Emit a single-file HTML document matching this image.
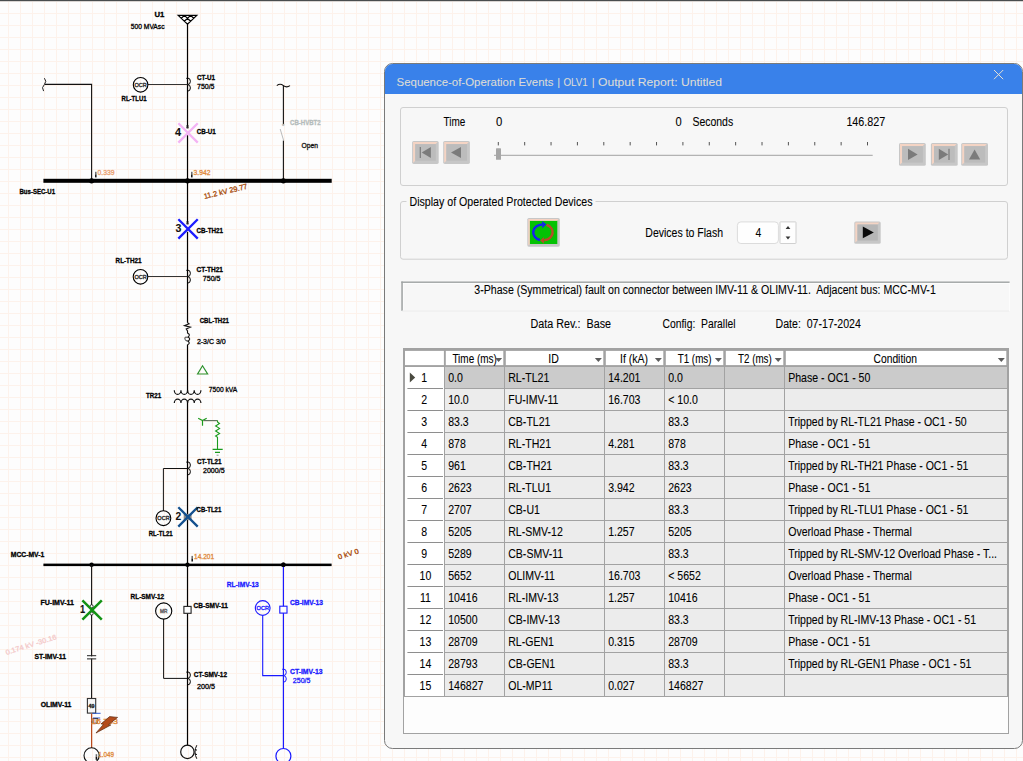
<!DOCTYPE html>
<html><head><meta charset="utf-8"><title>Sequence-of-Operation Events</title>
<style>
html,body{margin:0;padding:0;background:#fdfdfd;}
body{width:1023px;height:761px;overflow:hidden;position:relative;font-family:"Liberation Sans",sans-serif;}
svg{position:absolute;left:0;top:0;display:block;}
svg text{font-family:"Liberation Sans",sans-serif;}
</style></head><body>
<svg width="1023" height="761" viewBox="0 0 1023 761">
<defs>
<pattern id="grid" x="0" y="0" width="12" height="12" patternUnits="userSpaceOnUse">
<rect x="8" y="0" width="1" height="12" fill="#fdf2eb"/>
<rect x="0" y="1" width="12" height="1" fill="#fdf2eb"/>
</pattern>
</defs>
<rect x="0" y="0" width="1023" height="761" fill="#fdfdfd"/>
<rect x="0" y="0" width="1023" height="761" fill="url(#grid)"/>
<rect x="0" y="0" width="1023" height="1" fill="#484d4e"/>
<rect x="0" y="1" width="1023" height="0.5" fill="#b4b8b8"/>

<g id="oneline">
<path d="M178.2 15.4 H196.8 L187.5 24.2 Z M184.4 15.4 L181.3 18.3 M190.6 15.4 L184.4 21.3 M190.6 15.4 L193.7 18.3 M184.4 15.4 L190.6 21.3" stroke="#000" stroke-width="1.2" fill="none" />
<text x="154.50" y="16.80" font-size="7.4" fill="#000" textLength="9.80" lengthAdjust="spacingAndGlyphs" font-weight="bold" stroke="#000" stroke-width="0.3" >U1</text>
<text x="130.80" y="29.10" font-size="7" fill="#000" textLength="33.70" lengthAdjust="spacingAndGlyphs" stroke="#000" stroke-width="0.3" >500 MVAsc</text>
<line x1="187.50" y1="24.00" x2="187.50" y2="126.60" stroke="#000" stroke-width="1.2" />
<line x1="187.50" y1="135.20" x2="187.50" y2="222.40" stroke="#000" stroke-width="1.2" />
<line x1="187.50" y1="231.80" x2="187.50" y2="322.80" stroke="#000" stroke-width="1.2" />
<line x1="187.50" y1="344.60" x2="187.50" y2="392.60" stroke="#000" stroke-width="1.2" />
<line x1="187.50" y1="400.50" x2="187.50" y2="745.40" stroke="#000" stroke-width="1.2" />
<path d="M187.50 78.00 a2.9 3.3 0 0 1 0 6.6 a2.9 3.3 0 0 1 0 6.6" stroke="#000" stroke-width="1.0" fill="none" />
<path d="M186.10 78.60 l1.2 -0.8" stroke="#000" stroke-width="0.8" fill="none" />
<line x1="147.80" y1="84.50" x2="187.50" y2="84.50" stroke="#333" stroke-width="1.0" />
<circle cx="140.60" cy="84.80" r="7.30" fill="none" stroke="#000" stroke-width="1.1"/>
<text x="134.50" y="86.70" font-size="5" fill="#2a2a2a" textLength="12.40" lengthAdjust="spacingAndGlyphs" stroke="#2a2a2a" stroke-width="0.3" >OCR</text>
<text x="121.60" y="100.60" font-size="7" fill="#000" textLength="25.00" lengthAdjust="spacingAndGlyphs" font-weight="bold" stroke="#000" stroke-width="0.3" >RL-TLU1</text>
<text x="196.90" y="79.80" font-size="7" fill="#000" textLength="18.10" lengthAdjust="spacingAndGlyphs" font-weight="bold" stroke="#000" stroke-width="0.3" >CT-U1</text>
<text x="197.00" y="88.70" font-size="7" fill="#000" textLength="17.50" lengthAdjust="spacingAndGlyphs" stroke="#000" stroke-width="0.3" >750/5</text>
<path d="M44.4 78.2 q2.8 3 0 6.3 q-3.4 3 -0.8 6.6" stroke="#222" stroke-width="1.0" fill="none" />
<path d="M44.8 84.4 H91.6 V180" stroke="#111" stroke-width="1.1" fill="none" />
<path d="M276.8 85.6 q3.3 -2.6 6.6 0 q3.3 2.6 6.6 0" stroke="#111" stroke-width="1.1" fill="none" />
<line x1="283.40" y1="85.60" x2="283.40" y2="124.80" stroke="#111" stroke-width="1.1" />
<line x1="283.40" y1="140.40" x2="283.40" y2="180.00" stroke="#111" stroke-width="1.1" />
<line x1="283.60" y1="140.40" x2="280.20" y2="129.00" stroke="#bbb" stroke-width="1.0" />
<text x="282.00" y="128.00" font-size="6" fill="#bbb" stroke="#bbb" stroke-width="0.3" >*</text>
<text x="290.00" y="124.50" font-size="7" fill="#b4bcbc" textLength="30.70" lengthAdjust="spacingAndGlyphs" font-weight="bold" stroke="#b4bcbc" stroke-width="0.3" >CB-HVBT2</text>
<text x="301.50" y="148.40" font-size="7" fill="#111" textLength="16.50" lengthAdjust="spacingAndGlyphs" stroke="#111" stroke-width="0.3" >Open</text>
<path d="M178.35 123.20 L197.75 142.60 M197.75 123.20 L178.35 142.60" stroke="#f4b4f4" stroke-width="2.3" fill="none" />
<path d="M186 125.6 L189 128.2 M189 125.6 L186 128.2 M187.5 125 V128.6" stroke="#111" stroke-width="0.8" fill="none" />
<text x="175.10" y="135.90" font-size="10" fill="#111" textLength="6.10" lengthAdjust="spacingAndGlyphs" font-weight="bold" stroke="#111" stroke-width="0.08" >4</text>
<text x="196.80" y="133.70" font-size="7" fill="#000" textLength="19.00" lengthAdjust="spacingAndGlyphs" font-weight="bold" stroke="#000" stroke-width="0.3" >CB-U1</text>
<rect x="43.4" y="178.8" width="288.3" height="4" fill="#000"/>
<circle cx="91.6" cy="180.8" r="2.6" fill="#000"/>
<circle cx="187.5" cy="180.8" r="2.6" fill="#000"/>
<circle cx="283.4" cy="180.8" r="2.6" fill="#000"/>
<text x="19.50" y="193.50" font-size="7" fill="#000" textLength="35.60" lengthAdjust="spacingAndGlyphs" font-weight="bold" stroke="#000" stroke-width="0.3" >Bus-SEC-U1</text>
<rect x="95.05" y="171.80" width="1.5" height="2.6" fill="#6a6a6a"/>
<rect x="95.05" y="174.40" width="1.5" height="3" fill="#111"/>
<text x="97.60" y="175.00" font-size="6.8" fill="#e9a070" textLength="17.00" lengthAdjust="spacingAndGlyphs" stroke="#e9a070" stroke-width="0.3" >0.339</text>
<rect x="191.05" y="171.80" width="1.5" height="2.6" fill="#6a6a6a"/>
<rect x="191.05" y="174.40" width="1.5" height="3" fill="#111"/>
<text x="193.60" y="175.00" font-size="6.8" fill="#e08a3c" textLength="16.80" lengthAdjust="spacingAndGlyphs" stroke="#e08a3c" stroke-width="0.3" >3.942</text>
<g transform="translate(204.4,198.9) rotate(-13.3)">
<text x="0.00" y="0.00" font-size="7.4" fill="#a84a08" textLength="44.60" lengthAdjust="spacingAndGlyphs" stroke="#a84a08" stroke-width="0.3" >11.2 kV 29.77</text>
</g>
<path d="M178.35 219.20 L197.75 238.60 M197.75 219.20 L178.35 238.60" stroke="#1c1cff" stroke-width="2.3" fill="none" />
<path d="M186 221.6 L189 224.2 M189 221.6 L186 224.2 M187.5 221 V224.6" stroke="#111" stroke-width="0.8" fill="none" />
<text x="175.40" y="232.00" font-size="10" fill="#111" textLength="5.90" lengthAdjust="spacingAndGlyphs" font-weight="bold" stroke="#111" stroke-width="0.08" >3</text>
<text x="196.60" y="232.70" font-size="7" fill="#000" textLength="26.40" lengthAdjust="spacingAndGlyphs" font-weight="bold" stroke="#000" stroke-width="0.3" >CB-TH21</text>
<path d="M187.50 270.00 a2.9 3.3 0 0 1 0 6.6 a2.9 3.3 0 0 1 0 6.6" stroke="#000" stroke-width="1.0" fill="none" />
<path d="M186.10 270.60 l1.2 -0.8" stroke="#000" stroke-width="0.8" fill="none" />
<line x1="147.80" y1="276.50" x2="187.50" y2="276.50" stroke="#333" stroke-width="1.0" />
<circle cx="140.50" cy="276.80" r="7.30" fill="none" stroke="#000" stroke-width="1.1"/>
<text x="134.40" y="278.70" font-size="5" fill="#2a2a2a" textLength="12.40" lengthAdjust="spacingAndGlyphs" stroke="#2a2a2a" stroke-width="0.3" >OCR</text>
<text x="115.60" y="262.60" font-size="7" fill="#000" textLength="25.80" lengthAdjust="spacingAndGlyphs" font-weight="bold" stroke="#000" stroke-width="0.3" >RL-TH21</text>
<text x="196.60" y="271.70" font-size="7" fill="#000" textLength="26.40" lengthAdjust="spacingAndGlyphs" font-weight="bold" stroke="#000" stroke-width="0.3" >CT-TH21</text>
<text x="202.80" y="280.70" font-size="7" fill="#000" textLength="17.70" lengthAdjust="spacingAndGlyphs" stroke="#000" stroke-width="0.3" >750/5</text>
<path d="M187.5 322.6 L189.1 323.8 L184.5 325.6 L190.4 327.1 L186.2 328.9 L187.5 331 V333 q3.4 1.6 0.6 4 q3.2 2 0 4.2 q2.6 2 -0.6 3.6" stroke="#111" stroke-width="1.1" fill="none" />
<path d="M187.6 337.6 q-3.4 -1.6 -2.6 1.6 q0.6 2.4 2.8 1.6" stroke="#222" stroke-width="0.9" fill="none" />
<text x="199.70" y="322.60" font-size="7" fill="#000" textLength="29.30" lengthAdjust="spacingAndGlyphs" font-weight="bold" stroke="#000" stroke-width="0.3" >CBL-TH21</text>
<text x="196.90" y="343.70" font-size="7" fill="#000" textLength="28.80" lengthAdjust="spacingAndGlyphs" stroke="#000" stroke-width="0.3" >2-3/C 3/0</text>
<path d="M202.5 365.8 L207.6 374 H197.6 Z" stroke="#2e922e" stroke-width="1.2" fill="none" />
<path d="M174.3 390.2 a3.3 4.2 0 0 0 6.65 0 a3.3 4.2 0 0 0 6.65 0 a3.3 4.2 0 0 0 6.65 0 a3.3 4.2 0 0 0 6.65 0" stroke="#111" stroke-width="1.2" fill="none" />
<path d="M174.3 403.1 a3.3 3.9 0 0 1 6.65 0 a3.3 3.9 0 0 1 6.65 0 a3.3 3.9 0 0 1 6.65 0 a3.3 3.9 0 0 1 6.65 0" stroke="#111" stroke-width="1.2" fill="none" />
<text x="208.80" y="391.90" font-size="7" fill="#000" textLength="28.40" lengthAdjust="spacingAndGlyphs" stroke="#000" stroke-width="0.3" >7500 kVA</text>
<text x="146.00" y="397.80" font-size="7" fill="#000" textLength="15.10" lengthAdjust="spacingAndGlyphs" font-weight="bold" stroke="#000" stroke-width="0.3" >TR21</text>
<path d="M198.2 418.3 L202.5 420.6 L206.7 418.3 M202.5 420.6 V425.8" stroke="#1c9a1c" stroke-width="1.2" fill="none" />
<line x1="203.60" y1="420.60" x2="217.50" y2="420.60" stroke="#5a6e5a" stroke-width="1.1" />
<path d="M217.5 420.4 V422 L219.5 423.5 L215.6 426 L219.6 428.4 L215.6 431 L219.6 433.5 L215.6 436 L217.5 437.2 V449.4 M212.6 449.4 H222.7 M215 452.4 H220" stroke="#1c9a1c" stroke-width="1.1" fill="none" />
<line x1="216.60" y1="455.20" x2="218.60" y2="455.20" stroke="#8a9a8a" stroke-width="1.0" />
<path d="M187.50 461.80 a2.9 3.3 0 0 1 0 6.6 a2.9 3.3 0 0 1 0 6.6" stroke="#000" stroke-width="1.0" fill="none" />
<path d="M186.10 462.40 l1.2 -0.8" stroke="#000" stroke-width="0.8" fill="none" />
<path d="M187.5 468.5 H163.4 V511" stroke="#111" stroke-width="1.0" fill="none" />
<circle cx="163.40" cy="518.20" r="7.40" fill="none" stroke="#000" stroke-width="1.1"/>
<text x="157.30" y="520.10" font-size="5" fill="#2a2a2a" textLength="12.40" lengthAdjust="spacingAndGlyphs" stroke="#2a2a2a" stroke-width="0.3" >OCR</text>
<text x="196.90" y="463.60" font-size="7" fill="#000" textLength="24.60" lengthAdjust="spacingAndGlyphs" font-weight="bold" stroke="#000" stroke-width="0.3" >CT-TL21</text>
<text x="203.00" y="472.70" font-size="7" fill="#000" textLength="21.60" lengthAdjust="spacingAndGlyphs" stroke="#000" stroke-width="0.3" >2000/5</text>
<text x="148.80" y="535.60" font-size="7" fill="#000" textLength="23.90" lengthAdjust="spacingAndGlyphs" font-weight="bold" stroke="#000" stroke-width="0.3" >RL-TL21</text>
<rect x="183.7" y="513.9" width="7.9" height="6.2" fill="#8a8a8a"/>
<path d="M178.30 507.20 L197.70 526.60 M197.70 507.20 L178.30 526.60" stroke="#14508e" stroke-width="2.3" fill="none" />
<text x="175.40" y="519.80" font-size="10" fill="#111" textLength="5.70" lengthAdjust="spacingAndGlyphs" font-weight="bold" stroke="#111" stroke-width="0.08" >2</text>
<text x="196.60" y="511.70" font-size="7" fill="#000" textLength="24.70" lengthAdjust="spacingAndGlyphs" font-weight="bold" stroke="#000" stroke-width="0.3" >CB-TL21</text>
<rect x="43.4" y="563.6" width="288.2" height="2.5" fill="#000"/>
<circle cx="91.6" cy="564.8" r="2.2" fill="#000"/>
<circle cx="187.5" cy="564.8" r="2.2" fill="#000"/>
<circle cx="283.4" cy="564.8" r="2.2" fill="#000"/>
<text x="10.80" y="556.60" font-size="7" fill="#000" textLength="33.40" lengthAdjust="spacingAndGlyphs" font-weight="bold" stroke="#000" stroke-width="0.3" >MCC-MV-1</text>
<rect x="191.45" y="555.90" width="1.5" height="2.6" fill="#6a6a6a"/>
<rect x="191.45" y="558.50" width="1.5" height="3" fill="#111"/>
<text x="194.00" y="559.10" font-size="6.8" fill="#e08a3c" textLength="20.10" lengthAdjust="spacingAndGlyphs" stroke="#e08a3c" stroke-width="0.3" >14.201</text>
<g transform="translate(338.8,559.6) rotate(-17.5)">
<text x="0.00" y="0.00" font-size="7.2" fill="#a84808" textLength="21.50" lengthAdjust="spacingAndGlyphs" stroke="#a84808" stroke-width="0.3" >0 kV 0</text>
</g>
<line x1="91.60" y1="565.00" x2="91.60" y2="698.40" stroke="#111" stroke-width="1.1" />
<circle cx="91.6" cy="606.3" r="1.6" fill="#fff" stroke="#222" stroke-width="0.9"/>
<circle cx="91.6" cy="613.5" r="1.6" fill="#fff" stroke="#222" stroke-width="0.9"/>
<path d="M82.40 600.30 L101.80 619.70 M101.80 600.30 L82.40 619.70" stroke="#149214" stroke-width="2.5" fill="none" />
<text x="79.90" y="612.90" font-size="10" fill="#111" textLength="5.20" lengthAdjust="spacingAndGlyphs" font-weight="bold" stroke="#111" stroke-width="0.08" >1</text>
<text x="40.50" y="604.50" font-size="7" fill="#000" textLength="33.40" lengthAdjust="spacingAndGlyphs" font-weight="bold" stroke="#000" stroke-width="0.3" >FU-IMV-11</text>
<rect x="86" y="656.4" width="11.4" height="2.2" fill="#fdfdfd"/>
<line x1="87.00" y1="655.70" x2="96.20" y2="655.70" stroke="#222" stroke-width="1.0" />
<line x1="87.00" y1="658.90" x2="96.20" y2="658.90" stroke="#222" stroke-width="1.0" />
<text x="34.40" y="658.70" font-size="7" fill="#000" textLength="31.60" lengthAdjust="spacingAndGlyphs" font-weight="bold" stroke="#000" stroke-width="0.3" >ST-IMV-11</text>
<g transform="translate(6.4,655) rotate(-17.5)">
<text x="0.00" y="0.00" font-size="7" fill="#f4caca" textLength="53.00" lengthAdjust="spacingAndGlyphs" stroke="#f4caca" stroke-width="0.3" >0.174 kV -30.16</text>
</g>
<rect x="87.4" y="698.5" width="8.3" height="14.6" fill="#f6f6f6" stroke="#333" stroke-width="1.1"/>
<text x="88.60" y="708.40" font-size="5" fill="#222" textLength="6.00" lengthAdjust="spacingAndGlyphs" font-weight="bold" stroke="#222" stroke-width="0.3" >49</text>
<text x="40.70" y="706.90" font-size="7" fill="#000" textLength="30.70" lengthAdjust="spacingAndGlyphs" font-weight="bold" stroke="#000" stroke-width="0.3" >OLIMV-11</text>
<line x1="91.60" y1="713.40" x2="91.60" y2="748.00" stroke="#b84a1e" stroke-width="1.2" />
<line x1="92.40" y1="713.30" x2="100.60" y2="713.30" stroke="#2a5ad0" stroke-width="1.0" />
<line x1="93.00" y1="718.00" x2="100.20" y2="718.00" stroke="#2a5ad0" stroke-width="1.0" />
<rect x="93" y="718.6" width="4.6" height="4.6" fill="#d4d4dc" stroke="#2a2a3a" stroke-width="0.9"/>
<text x="91.00" y="723.60" font-size="6.6" fill="#e08a3c" textLength="27.00" lengthAdjust="spacingAndGlyphs" stroke="#e08a3c" stroke-width="0.3" >16.703</text>
<path d="M109.6 716.6 L117.6 717.4 L108.6 724.6 L110.8 725 L96 733 L103.4 724.4 L101.2 723.8 Z" stroke="#5c2c12" stroke-width="0.7" fill="#b44c1c" />
<circle cx="91.6" cy="755.4" r="7.6" fill="none" stroke="#111" stroke-width="1.1"/>
<rect x="95.65" y="754.20" width="1.5" height="2.6" fill="#6a6a6a"/>
<rect x="95.65" y="756.80" width="1.5" height="3" fill="#111"/>
<text x="98.20" y="757.40" font-size="6.8" fill="#e08a3c" textLength="15.70" lengthAdjust="spacingAndGlyphs" stroke="#e08a3c" stroke-width="0.3" >1.049</text>
<rect x="183.9" y="606.4" width="7.2" height="6.9" fill="#fdfdfd" stroke="#222" stroke-width="1.1"/>
<text x="193.60" y="608.00" font-size="7" fill="#000" textLength="34.30" lengthAdjust="spacingAndGlyphs" font-weight="bold" stroke="#000" stroke-width="0.3" >CB-SMV-11</text>
<path d="M163.6 619 V678.4 H187.5" stroke="#111" stroke-width="1.0" fill="none" />
<circle cx="163.70" cy="611.00" r="8.10" fill="none" stroke="#000" stroke-width="1.1"/>
<text x="160.10" y="612.80" font-size="4.6" fill="#555" textLength="7.40" lengthAdjust="spacingAndGlyphs" stroke="#555" stroke-width="0.3" >MR</text>
<text x="130.60" y="598.70" font-size="7" fill="#000" textLength="33.60" lengthAdjust="spacingAndGlyphs" font-weight="bold" stroke="#000" stroke-width="0.3" >RL-SMV-12</text>
<path d="M187.50 671.80 a2.9 3.3 0 0 1 0 6.6 a2.9 3.3 0 0 1 0 6.6" stroke="#000" stroke-width="1.0" fill="none" />
<path d="M186.10 672.40 l1.2 -0.8" stroke="#000" stroke-width="0.8" fill="none" />
<text x="193.80" y="676.90" font-size="7" fill="#000" textLength="33.20" lengthAdjust="spacingAndGlyphs" font-weight="bold" stroke="#000" stroke-width="0.3" >CT-SMV-12</text>
<text x="197.00" y="688.60" font-size="7" fill="#000" textLength="18.00" lengthAdjust="spacingAndGlyphs" stroke="#000" stroke-width="0.3" >200/5</text>
<circle cx="187.4" cy="751.9" r="6.7" fill="none" stroke="#111" stroke-width="1.2"/>
<path d="M196.8 745.2 Q193.2 752 196.8 758.8 M194.9 749.4 L197 750.2 M194.7 753.8 L197 754.6" stroke="#111" stroke-width="1.0" fill="none" />
<line x1="283.40" y1="565.00" x2="283.40" y2="748.20" stroke="#1a1aff" stroke-width="1.2" />
<circle cx="283.4" cy="564.8" r="2.2" fill="#000"/>
<rect x="279.8" y="606.2" width="7.2" height="6.9" fill="#fdfdfd" stroke="#1a1aff" stroke-width="1.1"/>
<path d="M262.7 615.4 V675.6 H283.4" stroke="#1a1aff" stroke-width="1.1" fill="none" />
<circle cx="262.70" cy="608.00" r="7.40" fill="none" stroke="#1a1aff" stroke-width="1.1"/>
<text x="256.60" y="609.90" font-size="5" fill="#1a1aff" textLength="12.40" lengthAdjust="spacingAndGlyphs" stroke="#1a1aff" stroke-width="0.3" >OCR</text>
<text x="226.80" y="586.80" font-size="7" fill="#1a1aff" textLength="32.00" lengthAdjust="spacingAndGlyphs" font-weight="bold" stroke="#1a1aff" stroke-width="0.3" >RL-IMV-13</text>
<text x="290.00" y="604.90" font-size="7" fill="#1a1aff" textLength="33.00" lengthAdjust="spacingAndGlyphs" font-weight="bold" stroke="#1a1aff" stroke-width="0.3" >CB-IMV-13</text>
<path d="M283.40 669.00 a2.9 3.3 0 0 1 0 6.6 a2.9 3.3 0 0 1 0 6.6" stroke="#1a1aff" stroke-width="1.0" fill="none" />
<path d="M282.00 669.60 l1.2 -0.8" stroke="#1a1aff" stroke-width="0.8" fill="none" />
<text x="290.00" y="673.50" font-size="7" fill="#1a1aff" textLength="32.50" lengthAdjust="spacingAndGlyphs" font-weight="bold" stroke="#1a1aff" stroke-width="0.3" >CT-IMV-13</text>
<text x="292.80" y="682.80" font-size="7" fill="#1a1aff" textLength="17.70" lengthAdjust="spacingAndGlyphs" stroke="#1a1aff" stroke-width="0.3" >250/5</text>
<circle cx="283.4" cy="756" r="7.5" fill="none" stroke="#1a1aff" stroke-width="1.2"/>
</g>
<g id="dialog">
<path d="M384.5 740.5 V71.5 a8 8 0 0 1 8 -8 H1014.5 a8 8 0 0 1 8 8 V740.5 a8 8 0 0 1 -8 8 H392.5 a8 8 0 0 1 -8 -8 Z" fill="#f7f7f7" stroke="#7a7a7a" stroke-width="1"/>
<path d="M385.0 94 V71.5 a7.5 7.5 0 0 1 7.5 -7.5 H1014.5 a7.5 7.5 0 0 1 7.5 7.5 V94 Z" fill="#3981ea"/>
<text x="396.60" y="85.90" font-size="11" fill="#dcdcd6" textLength="156.80" lengthAdjust="spacingAndGlyphs" stroke="#dcdcd6" stroke-width="0.08" >Sequence-of-Operation Events</text>
<text x="557.20" y="85.90" font-size="11" fill="#dcdcd6" stroke="#dcdcd6" stroke-width="0.08" >|</text>
<text x="563.40" y="85.90" font-size="11" fill="#dcdcd6" textLength="24.40" lengthAdjust="spacingAndGlyphs" stroke="#dcdcd6" stroke-width="0.08" >OLV1</text>
<text x="591.80" y="85.90" font-size="11" fill="#dcdcd6" stroke="#dcdcd6" stroke-width="0.08" >|</text>
<text x="598.10" y="85.90" font-size="11" fill="#dcdcd6" textLength="123.90" lengthAdjust="spacingAndGlyphs" stroke="#dcdcd6" stroke-width="0.08" >Output Report: Untitled</text>
<path d="M994 70 L1003.2 79.2 M1003.2 70 L994 79.2" stroke="#e6e0d4" stroke-width="1.0" fill="none" />
<rect x="400.5" y="107.5" width="607" height="78" rx="2.5" fill="none" stroke="#d0d0d0" stroke-width="1"/>
<text x="443.60" y="125.80" font-size="12" fill="#000" textLength="21.80" lengthAdjust="spacingAndGlyphs" stroke="#000" stroke-width="0.08" >Time</text>
<text x="495.90" y="125.80" font-size="12" fill="#000" textLength="6.30" lengthAdjust="spacingAndGlyphs" stroke="#000" stroke-width="0.08" >0</text>
<text x="675.40" y="125.80" font-size="12" fill="#000" textLength="6.20" lengthAdjust="spacingAndGlyphs" stroke="#000" stroke-width="0.08" >0</text>
<text x="692.40" y="125.80" font-size="12" fill="#000" textLength="40.80" lengthAdjust="spacingAndGlyphs" stroke="#000" stroke-width="0.08" >Seconds</text>
<text x="846.40" y="125.80" font-size="12" fill="#000" textLength="38.90" lengthAdjust="spacingAndGlyphs" stroke="#000" stroke-width="0.08" >146.827</text>
<rect x="412.10" y="141.00" width="26.60" height="22.90" fill="#c7c7c7" rx="1.6"/>
<path d="M413.10 142.00 H437.50 L435.50 144.20 H415.30 V160.70 L413.10 162.70 Z" fill="#f4d4c4"/>
<rect x="415.20" y="144.10" width="20.60" height="16.60" fill="#bcbcbc" />
<rect x="419.70" y="147.00" width="1.20" height="11.00" fill="#7b7b7b" />
<path d="M421.7 152.5 L430.9 147 V158 Z" stroke="none" stroke-width="0" fill="#7b7b7b" />
<rect x="443.20" y="141.00" width="26.70" height="22.90" fill="#c7c7c7" rx="1.6"/>
<path d="M444.20 142.00 H468.70 L466.70 144.20 H446.40 V160.70 L444.20 162.70 Z" fill="#f4d4c4"/>
<rect x="446.30" y="144.10" width="20.70" height="16.60" fill="#bcbcbc" />
<path d="M451 152.5 L461 147 V158 Z" stroke="none" stroke-width="0" fill="#7b7b7b" />
<rect x="497.80" y="142.00" width="1.00" height="3.40" fill="#555" />
<rect x="524.17" y="142.00" width="1.00" height="3.40" fill="#555" />
<rect x="550.54" y="142.00" width="1.00" height="3.40" fill="#555" />
<rect x="576.91" y="142.00" width="1.00" height="3.40" fill="#555" />
<rect x="603.29" y="142.00" width="1.00" height="3.40" fill="#555" />
<rect x="629.66" y="142.00" width="1.00" height="3.40" fill="#555" />
<rect x="656.03" y="142.00" width="1.00" height="3.40" fill="#555" />
<rect x="682.40" y="142.00" width="1.00" height="3.40" fill="#555" />
<rect x="708.77" y="142.00" width="1.00" height="3.40" fill="#555" />
<rect x="735.14" y="142.00" width="1.00" height="3.40" fill="#555" />
<rect x="761.51" y="142.00" width="1.00" height="3.40" fill="#555" />
<rect x="787.89" y="142.00" width="1.00" height="3.40" fill="#555" />
<rect x="814.26" y="142.00" width="1.00" height="3.40" fill="#555" />
<rect x="840.63" y="142.00" width="1.00" height="3.40" fill="#555" />
<rect x="867.00" y="142.00" width="1.00" height="3.40" fill="#555" />
<rect x="494.00" y="154.80" width="378.70" height="1.00" fill="#a2a2a2" />
<rect x="496.00" y="148.20" width="5.00" height="11.60" fill="#a6a6a6" rx="0.6"/>
<rect x="899.00" y="143.00" width="26.80" height="22.80" fill="#c7c7c7" rx="1.6"/>
<path d="M900.00 144.00 H924.60 L922.60 146.20 H902.20 V162.60 L900.00 164.60 Z" fill="#f4d4c4"/>
<rect x="902.10" y="146.10" width="20.80" height="16.50" fill="#bcbcbc" />
<path d="M917.6 154.4 L908 148.8 V160 Z" stroke="none" stroke-width="0" fill="#7b7b7b" />
<rect x="930.90" y="143.00" width="26.80" height="22.80" fill="#c7c7c7" rx="1.6"/>
<path d="M931.90 144.00 H956.50 L954.50 146.20 H934.10 V162.60 L931.90 164.60 Z" fill="#f4d4c4"/>
<rect x="934.00" y="146.10" width="20.80" height="16.50" fill="#bcbcbc" />
<path d="M948.2 154.4 L938.8 148.8 V160 Z" stroke="none" stroke-width="0" fill="#7b7b7b" />
<rect x="948.40" y="148.80" width="1.20" height="11.20" fill="#7b7b7b" />
<rect x="961.20" y="143.00" width="26.80" height="22.80" fill="#c7c7c7" rx="1.6"/>
<path d="M962.20 144.00 H986.80 L984.80 146.20 H964.40 V162.60 L962.20 164.60 Z" fill="#f4d4c4"/>
<rect x="964.30" y="146.10" width="20.80" height="16.50" fill="#bcbcbc" />
<path d="M974.6 149.4 L980.2 159.4 H969 Z" stroke="none" stroke-width="0" fill="#7b7b7b" />
<rect x="400.5" y="201.5" width="607" height="57.7" rx="2.5" fill="none" stroke="#d0d0d0" stroke-width="1"/>
<rect x="406.50" y="199.00" width="189.00" height="5.00" fill="#f7f7f7" />
<text x="409.50" y="206.10" font-size="12" fill="#000" textLength="183.00" lengthAdjust="spacingAndGlyphs" stroke="#000" stroke-width="0.08" >Display of Operated Protected Devices</text>
<rect x="527.30" y="218.00" width="32.50" height="28.70" fill="#c7c7c7" rx="1.6"/>
<path d="M528.3 219 H558.6 L556.8 221 H530 V244 L528.3 245.6 Z" fill="#f6d2c2"/>
<rect x="529.90" y="220.90" width="27.40" height="23.10" fill="#04c204" />
<path d="M539.9 240 A9.6 8 0 0 1 542.2 224.4" fill="none" stroke="#1422f0" stroke-width="2.5"/>
<path d="M546.5 224.8 A9.6 8 0 0 1 544.2 240.2" fill="none" stroke="#b84c28" stroke-width="2.5"/>
<path d="M542.1 221.1 L546.3 224.5 L542.3 228.3 Z" fill="#1422f0"/>
<path d="M543.9 237 L540.2 240.4 L543.9 243.8 Z" fill="#b84c28"/>
<text x="645.30" y="236.70" font-size="12" fill="#000" textLength="77.80" lengthAdjust="spacingAndGlyphs" stroke="#000" stroke-width="0.08" >Devices to Flash</text>
<rect x="737.4" y="221.9" width="41" height="21.6" rx="3.5" fill="#fefefe" stroke="#dcdcdc" stroke-width="1"/>
<text x="755.40" y="236.70" font-size="12" fill="#000" textLength="5.80" lengthAdjust="spacingAndGlyphs" stroke="#000" stroke-width="0.08" >4</text>
<rect x="780" y="221.9" width="16" height="21.6" rx="0.5" fill="#fefefe" stroke="#d0d0d0" stroke-width="1"/>
<path d="M788 226 L790.4 229 H785.6 Z" stroke="none" stroke-width="0" fill="#333" />
<path d="M788 239.4 L790.4 236.4 H785.6 Z" stroke="none" stroke-width="0" fill="#333" />
<rect x="854.30" y="221.40" width="26.40" height="22.40" fill="#c7c7c7" rx="1.6"/>
<path d="M855.30 222.40 H879.50 L877.50 224.60 H857.50 V240.60 L855.30 242.60 Z" fill="#f4d4c4"/>
<rect x="857.40" y="224.50" width="20.40" height="16.10" fill="#b6b6b6" />
<path d="M873.8 232.4 L862.8 226.6 V238.2 Z" stroke="none" stroke-width="0" fill="#0a0a0a" />
<rect x="401.30" y="281.50" width="608.60" height="29.90" fill="#f7f7f7" />
<rect x="402.60" y="282.80" width="606.80" height="1.00" fill="#fdfdfd" />
<rect x="402.60" y="282.80" width="1.00" height="27.80" fill="#fdfdfd" />
<rect x="401.30" y="281.50" width="608.30" height="1.40" fill="#9ea2a2" />
<rect x="401.30" y="281.50" width="1.50" height="29.30" fill="#9ea2a2" />
<rect x="402.00" y="310.60" width="607.90" height="0.90" fill="#ebebeb" />
<rect x="1009.00" y="282.90" width="1.00" height="28.50" fill="#fcfcfc" />
<text x="474.30" y="293.70" font-size="12" fill="#000" textLength="461.50" lengthAdjust="spacingAndGlyphs" stroke="#000" stroke-width="0.08" style="white-space:pre">3-Phase (Symmetrical) fault on connector between IMV-11 &amp; OLIMV-11.  Adjacent bus: MCC-MV-1</text>
<text x="530.50" y="327.50" font-size="12" fill="#000" textLength="80.50" lengthAdjust="spacingAndGlyphs" stroke="#000" stroke-width="0.08" style="white-space:pre">Data Rev.:  Base</text>
<text x="662.50" y="327.50" font-size="12" fill="#000" textLength="73.00" lengthAdjust="spacingAndGlyphs" stroke="#000" stroke-width="0.08" style="white-space:pre">Config:  Parallel</text>
<text x="775.50" y="327.50" font-size="12" fill="#000" textLength="85.40" lengthAdjust="spacingAndGlyphs" stroke="#000" stroke-width="0.08" style="white-space:pre">Date:  07-17-2024</text>
<rect x="403.00" y="348.00" width="606.00" height="386.00" fill="#a2a2a2" />
<rect x="404.00" y="349.00" width="604.00" height="384.00" fill="#fdfdfd" />
<rect x="404.00" y="348.00" width="605.00" height="19.00" fill="#a2a2a2" />
<rect x="404.00" y="367.00" width="605.00" height="330.00" fill="#a2a2a2" />
<rect x="405.00" y="350.90" width="38.90" height="14.20" fill="#ffffff" />
<rect x="445.80" y="350.90" width="57.50" height="14.20" fill="#ffffff" />
<rect x="505.80" y="350.90" width="97.50" height="14.20" fill="#ffffff" />
<rect x="605.80" y="350.90" width="57.50" height="14.20" fill="#ffffff" />
<rect x="665.80" y="350.90" width="57.50" height="14.20" fill="#ffffff" />
<rect x="725.80" y="350.90" width="57.50" height="14.20" fill="#ffffff" />
<rect x="785.80" y="350.90" width="220.50" height="14.20" fill="#ffffff" />
<text x="452.40" y="363.40" font-size="12" fill="#000" textLength="44.50" lengthAdjust="spacingAndGlyphs" stroke="#000" stroke-width="0.08" >Time (ms)</text>
<path d="M495.10 358 h7 l-3.5 4 z" stroke="none" stroke-width="0" fill="#5c5c5c" />
<text transform="translate(553.50,363.40) scale(0.88,1)" font-size="12" fill="#000" text-anchor="middle" stroke="#000" stroke-width="0.08">ID</text>
<path d="M594.90 358 h7 l-3.5 4 z" stroke="none" stroke-width="0" fill="#5c5c5c" />
<text x="620.10" y="363.40" font-size="12" fill="#000" textLength="27.90" lengthAdjust="spacingAndGlyphs" stroke="#000" stroke-width="0.08" >If (kA)</text>
<path d="M654.90 358 h7 l-3.5 4 z" stroke="none" stroke-width="0" fill="#5c5c5c" />
<text x="677.70" y="363.40" font-size="12" fill="#000" textLength="33.80" lengthAdjust="spacingAndGlyphs" stroke="#000" stroke-width="0.08" >T1 (ms)</text>
<path d="M714.90 358 h7 l-3.5 4 z" stroke="none" stroke-width="0" fill="#5c5c5c" />
<text x="738.00" y="363.40" font-size="12" fill="#000" textLength="33.70" lengthAdjust="spacingAndGlyphs" stroke="#000" stroke-width="0.08" >T2 (ms)</text>
<path d="M774.70 358 h7 l-3.5 4 z" stroke="none" stroke-width="0" fill="#5c5c5c" />
<text x="873.50" y="363.40" font-size="12" fill="#000" textLength="43.50" lengthAdjust="spacingAndGlyphs" stroke="#000" stroke-width="0.08" >Condition</text>
<path d="M997.80 358 h7 l-3.5 4 z" stroke="none" stroke-width="0" fill="#5c5c5c" />
<rect x="405.00" y="367.00" width="39.00" height="22.00" fill="#ffffff" />
<rect x="407.40" y="388.00" width="35.60" height="1.00" fill="#8e8e8e" />
<rect x="445.00" y="367.00" width="59.00" height="21.00" fill="#cbcbcb" />
<rect x="505.00" y="367.00" width="99.00" height="21.00" fill="#cbcbcb" />
<rect x="605.00" y="367.00" width="59.00" height="21.00" fill="#cbcbcb" />
<rect x="665.00" y="367.00" width="59.00" height="21.00" fill="#cbcbcb" />
<rect x="725.00" y="367.00" width="59.00" height="21.00" fill="#cbcbcb" />
<rect x="785.00" y="367.00" width="222.00" height="21.00" fill="#cbcbcb" />
<text transform="translate(424.30,382.20) scale(0.88,1)" font-size="12" fill="#000" text-anchor="middle" stroke="#000" stroke-width="0.08">1</text>
<text transform="translate(448.20,382.20) scale(0.88,1)" font-size="12" fill="#000" stroke="#000" stroke-width="0.08">0.0</text>
<text transform="translate(508.20,382.20) scale(0.88,1)" font-size="12" fill="#000" stroke="#000" stroke-width="0.08">RL-TL21</text>
<text transform="translate(608.20,382.20) scale(0.88,1)" font-size="12" fill="#000" stroke="#000" stroke-width="0.08">14.201</text>
<text transform="translate(668.20,382.20) scale(0.88,1)" font-size="12" fill="#000" stroke="#000" stroke-width="0.08">0.0</text>
<text transform="translate(788.20,382.20) scale(0.88,1)" font-size="12" fill="#000" stroke="#000" stroke-width="0.08">Phase - OC1 - 50</text>
<rect x="405.00" y="389.00" width="39.00" height="22.00" fill="#ffffff" />
<rect x="407.40" y="410.00" width="35.60" height="1.00" fill="#8e8e8e" />
<rect x="445.00" y="389.00" width="59.00" height="21.00" fill="#ececec" />
<rect x="505.00" y="389.00" width="99.00" height="21.00" fill="#ececec" />
<rect x="605.00" y="389.00" width="59.00" height="21.00" fill="#ececec" />
<rect x="665.00" y="389.00" width="59.00" height="21.00" fill="#ececec" />
<rect x="725.00" y="389.00" width="59.00" height="21.00" fill="#ececec" />
<rect x="785.00" y="389.00" width="222.00" height="21.00" fill="#ececec" />
<text transform="translate(424.30,404.20) scale(0.88,1)" font-size="12" fill="#000" text-anchor="middle" stroke="#000" stroke-width="0.08">2</text>
<text transform="translate(448.20,404.20) scale(0.88,1)" font-size="12" fill="#000" stroke="#000" stroke-width="0.08">10.0</text>
<text transform="translate(508.20,404.20) scale(0.88,1)" font-size="12" fill="#000" stroke="#000" stroke-width="0.08">FU-IMV-11</text>
<text transform="translate(608.20,404.20) scale(0.88,1)" font-size="12" fill="#000" stroke="#000" stroke-width="0.08">16.703</text>
<text transform="translate(668.20,404.20) scale(0.88,1)" font-size="12" fill="#000" stroke="#000" stroke-width="0.08">&lt; 10.0</text>
<rect x="405.00" y="411.00" width="39.00" height="22.00" fill="#ffffff" />
<rect x="407.40" y="432.00" width="35.60" height="1.00" fill="#8e8e8e" />
<rect x="445.00" y="411.00" width="59.00" height="21.00" fill="#ececec" />
<rect x="505.00" y="411.00" width="99.00" height="21.00" fill="#ececec" />
<rect x="605.00" y="411.00" width="59.00" height="21.00" fill="#ececec" />
<rect x="665.00" y="411.00" width="59.00" height="21.00" fill="#ececec" />
<rect x="725.00" y="411.00" width="59.00" height="21.00" fill="#ececec" />
<rect x="785.00" y="411.00" width="222.00" height="21.00" fill="#ececec" />
<text transform="translate(424.30,426.20) scale(0.88,1)" font-size="12" fill="#000" text-anchor="middle" stroke="#000" stroke-width="0.08">3</text>
<text transform="translate(448.20,426.20) scale(0.88,1)" font-size="12" fill="#000" stroke="#000" stroke-width="0.08">83.3</text>
<text transform="translate(508.20,426.20) scale(0.88,1)" font-size="12" fill="#000" stroke="#000" stroke-width="0.08">CB-TL21</text>
<text transform="translate(668.20,426.20) scale(0.88,1)" font-size="12" fill="#000" stroke="#000" stroke-width="0.08">83.3</text>
<text transform="translate(788.20,426.20) scale(0.88,1)" font-size="12" fill="#000" stroke="#000" stroke-width="0.08">Tripped by RL-TL21 Phase - OC1 - 50</text>
<rect x="405.00" y="433.00" width="39.00" height="22.00" fill="#ffffff" />
<rect x="407.40" y="454.00" width="35.60" height="1.00" fill="#8e8e8e" />
<rect x="445.00" y="433.00" width="59.00" height="21.00" fill="#ececec" />
<rect x="505.00" y="433.00" width="99.00" height="21.00" fill="#ececec" />
<rect x="605.00" y="433.00" width="59.00" height="21.00" fill="#ececec" />
<rect x="665.00" y="433.00" width="59.00" height="21.00" fill="#ececec" />
<rect x="725.00" y="433.00" width="59.00" height="21.00" fill="#ececec" />
<rect x="785.00" y="433.00" width="222.00" height="21.00" fill="#ececec" />
<text transform="translate(424.30,448.20) scale(0.88,1)" font-size="12" fill="#000" text-anchor="middle" stroke="#000" stroke-width="0.08">4</text>
<text transform="translate(448.20,448.20) scale(0.88,1)" font-size="12" fill="#000" stroke="#000" stroke-width="0.08">878</text>
<text transform="translate(508.20,448.20) scale(0.88,1)" font-size="12" fill="#000" stroke="#000" stroke-width="0.08">RL-TH21</text>
<text transform="translate(608.20,448.20) scale(0.88,1)" font-size="12" fill="#000" stroke="#000" stroke-width="0.08">4.281</text>
<text transform="translate(668.20,448.20) scale(0.88,1)" font-size="12" fill="#000" stroke="#000" stroke-width="0.08">878</text>
<text transform="translate(788.20,448.20) scale(0.88,1)" font-size="12" fill="#000" stroke="#000" stroke-width="0.08">Phase - OC1 - 51</text>
<rect x="405.00" y="455.00" width="39.00" height="22.00" fill="#ffffff" />
<rect x="407.40" y="476.00" width="35.60" height="1.00" fill="#8e8e8e" />
<rect x="445.00" y="455.00" width="59.00" height="21.00" fill="#ececec" />
<rect x="505.00" y="455.00" width="99.00" height="21.00" fill="#ececec" />
<rect x="605.00" y="455.00" width="59.00" height="21.00" fill="#ececec" />
<rect x="665.00" y="455.00" width="59.00" height="21.00" fill="#ececec" />
<rect x="725.00" y="455.00" width="59.00" height="21.00" fill="#ececec" />
<rect x="785.00" y="455.00" width="222.00" height="21.00" fill="#ececec" />
<text transform="translate(424.30,470.20) scale(0.88,1)" font-size="12" fill="#000" text-anchor="middle" stroke="#000" stroke-width="0.08">5</text>
<text transform="translate(448.20,470.20) scale(0.88,1)" font-size="12" fill="#000" stroke="#000" stroke-width="0.08">961</text>
<text transform="translate(508.20,470.20) scale(0.88,1)" font-size="12" fill="#000" stroke="#000" stroke-width="0.08">CB-TH21</text>
<text transform="translate(668.20,470.20) scale(0.88,1)" font-size="12" fill="#000" stroke="#000" stroke-width="0.08">83.3</text>
<text transform="translate(788.20,470.20) scale(0.88,1)" font-size="12" fill="#000" stroke="#000" stroke-width="0.08">Tripped by RL-TH21 Phase - OC1 - 51</text>
<rect x="405.00" y="477.00" width="39.00" height="22.00" fill="#ffffff" />
<rect x="407.40" y="498.00" width="35.60" height="1.00" fill="#8e8e8e" />
<rect x="445.00" y="477.00" width="59.00" height="21.00" fill="#ececec" />
<rect x="505.00" y="477.00" width="99.00" height="21.00" fill="#ececec" />
<rect x="605.00" y="477.00" width="59.00" height="21.00" fill="#ececec" />
<rect x="665.00" y="477.00" width="59.00" height="21.00" fill="#ececec" />
<rect x="725.00" y="477.00" width="59.00" height="21.00" fill="#ececec" />
<rect x="785.00" y="477.00" width="222.00" height="21.00" fill="#ececec" />
<text transform="translate(424.30,492.20) scale(0.88,1)" font-size="12" fill="#000" text-anchor="middle" stroke="#000" stroke-width="0.08">6</text>
<text transform="translate(448.20,492.20) scale(0.88,1)" font-size="12" fill="#000" stroke="#000" stroke-width="0.08">2623</text>
<text transform="translate(508.20,492.20) scale(0.88,1)" font-size="12" fill="#000" stroke="#000" stroke-width="0.08">RL-TLU1</text>
<text transform="translate(608.20,492.20) scale(0.88,1)" font-size="12" fill="#000" stroke="#000" stroke-width="0.08">3.942</text>
<text transform="translate(668.20,492.20) scale(0.88,1)" font-size="12" fill="#000" stroke="#000" stroke-width="0.08">2623</text>
<text transform="translate(788.20,492.20) scale(0.88,1)" font-size="12" fill="#000" stroke="#000" stroke-width="0.08">Phase - OC1 - 51</text>
<rect x="405.00" y="499.00" width="39.00" height="22.00" fill="#ffffff" />
<rect x="407.40" y="520.00" width="35.60" height="1.00" fill="#8e8e8e" />
<rect x="445.00" y="499.00" width="59.00" height="21.00" fill="#ececec" />
<rect x="505.00" y="499.00" width="99.00" height="21.00" fill="#ececec" />
<rect x="605.00" y="499.00" width="59.00" height="21.00" fill="#ececec" />
<rect x="665.00" y="499.00" width="59.00" height="21.00" fill="#ececec" />
<rect x="725.00" y="499.00" width="59.00" height="21.00" fill="#ececec" />
<rect x="785.00" y="499.00" width="222.00" height="21.00" fill="#ececec" />
<text transform="translate(424.30,514.20) scale(0.88,1)" font-size="12" fill="#000" text-anchor="middle" stroke="#000" stroke-width="0.08">7</text>
<text transform="translate(448.20,514.20) scale(0.88,1)" font-size="12" fill="#000" stroke="#000" stroke-width="0.08">2707</text>
<text transform="translate(508.20,514.20) scale(0.88,1)" font-size="12" fill="#000" stroke="#000" stroke-width="0.08">CB-U1</text>
<text transform="translate(668.20,514.20) scale(0.88,1)" font-size="12" fill="#000" stroke="#000" stroke-width="0.08">83.3</text>
<text transform="translate(788.20,514.20) scale(0.88,1)" font-size="12" fill="#000" stroke="#000" stroke-width="0.08">Tripped by RL-TLU1 Phase - OC1 - 51</text>
<rect x="405.00" y="521.00" width="39.00" height="22.00" fill="#ffffff" />
<rect x="407.40" y="542.00" width="35.60" height="1.00" fill="#8e8e8e" />
<rect x="445.00" y="521.00" width="59.00" height="21.00" fill="#ececec" />
<rect x="505.00" y="521.00" width="99.00" height="21.00" fill="#ececec" />
<rect x="605.00" y="521.00" width="59.00" height="21.00" fill="#ececec" />
<rect x="665.00" y="521.00" width="59.00" height="21.00" fill="#ececec" />
<rect x="725.00" y="521.00" width="59.00" height="21.00" fill="#ececec" />
<rect x="785.00" y="521.00" width="222.00" height="21.00" fill="#ececec" />
<text transform="translate(424.30,536.20) scale(0.88,1)" font-size="12" fill="#000" text-anchor="middle" stroke="#000" stroke-width="0.08">8</text>
<text transform="translate(448.20,536.20) scale(0.88,1)" font-size="12" fill="#000" stroke="#000" stroke-width="0.08">5205</text>
<text transform="translate(508.20,536.20) scale(0.88,1)" font-size="12" fill="#000" stroke="#000" stroke-width="0.08">RL-SMV-12</text>
<text transform="translate(608.20,536.20) scale(0.88,1)" font-size="12" fill="#000" stroke="#000" stroke-width="0.08">1.257</text>
<text transform="translate(668.20,536.20) scale(0.88,1)" font-size="12" fill="#000" stroke="#000" stroke-width="0.08">5205</text>
<text transform="translate(788.20,536.20) scale(0.88,1)" font-size="12" fill="#000" stroke="#000" stroke-width="0.08">Overload Phase - Thermal</text>
<rect x="405.00" y="543.00" width="39.00" height="22.00" fill="#ffffff" />
<rect x="407.40" y="564.00" width="35.60" height="1.00" fill="#8e8e8e" />
<rect x="445.00" y="543.00" width="59.00" height="21.00" fill="#ececec" />
<rect x="505.00" y="543.00" width="99.00" height="21.00" fill="#ececec" />
<rect x="605.00" y="543.00" width="59.00" height="21.00" fill="#ececec" />
<rect x="665.00" y="543.00" width="59.00" height="21.00" fill="#ececec" />
<rect x="725.00" y="543.00" width="59.00" height="21.00" fill="#ececec" />
<rect x="785.00" y="543.00" width="222.00" height="21.00" fill="#ececec" />
<text transform="translate(424.30,558.20) scale(0.88,1)" font-size="12" fill="#000" text-anchor="middle" stroke="#000" stroke-width="0.08">9</text>
<text transform="translate(448.20,558.20) scale(0.88,1)" font-size="12" fill="#000" stroke="#000" stroke-width="0.08">5289</text>
<text transform="translate(508.20,558.20) scale(0.88,1)" font-size="12" fill="#000" stroke="#000" stroke-width="0.08">CB-SMV-11</text>
<text transform="translate(668.20,558.20) scale(0.88,1)" font-size="12" fill="#000" stroke="#000" stroke-width="0.08">83.3</text>
<text transform="translate(788.20,558.20) scale(0.88,1)" font-size="12" fill="#000" stroke="#000" stroke-width="0.08">Tripped by RL-SMV-12 Overload Phase - T...</text>
<rect x="405.00" y="565.00" width="39.00" height="22.00" fill="#ffffff" />
<rect x="407.40" y="586.00" width="35.60" height="1.00" fill="#8e8e8e" />
<rect x="445.00" y="565.00" width="59.00" height="21.00" fill="#ececec" />
<rect x="505.00" y="565.00" width="99.00" height="21.00" fill="#ececec" />
<rect x="605.00" y="565.00" width="59.00" height="21.00" fill="#ececec" />
<rect x="665.00" y="565.00" width="59.00" height="21.00" fill="#ececec" />
<rect x="725.00" y="565.00" width="59.00" height="21.00" fill="#ececec" />
<rect x="785.00" y="565.00" width="222.00" height="21.00" fill="#ececec" />
<text transform="translate(425.40,580.20) scale(0.88,1)" font-size="12" fill="#000" text-anchor="middle" stroke="#000" stroke-width="0.08">10</text>
<text transform="translate(448.20,580.20) scale(0.88,1)" font-size="12" fill="#000" stroke="#000" stroke-width="0.08">5652</text>
<text transform="translate(508.20,580.20) scale(0.88,1)" font-size="12" fill="#000" stroke="#000" stroke-width="0.08">OLIMV-11</text>
<text transform="translate(608.20,580.20) scale(0.88,1)" font-size="12" fill="#000" stroke="#000" stroke-width="0.08">16.703</text>
<text transform="translate(668.20,580.20) scale(0.88,1)" font-size="12" fill="#000" stroke="#000" stroke-width="0.08">&lt; 5652</text>
<text transform="translate(788.20,580.20) scale(0.88,1)" font-size="12" fill="#000" stroke="#000" stroke-width="0.08">Overload Phase - Thermal</text>
<rect x="405.00" y="587.00" width="39.00" height="22.00" fill="#ffffff" />
<rect x="407.40" y="608.00" width="35.60" height="1.00" fill="#8e8e8e" />
<rect x="445.00" y="587.00" width="59.00" height="21.00" fill="#ececec" />
<rect x="505.00" y="587.00" width="99.00" height="21.00" fill="#ececec" />
<rect x="605.00" y="587.00" width="59.00" height="21.00" fill="#ececec" />
<rect x="665.00" y="587.00" width="59.00" height="21.00" fill="#ececec" />
<rect x="725.00" y="587.00" width="59.00" height="21.00" fill="#ececec" />
<rect x="785.00" y="587.00" width="222.00" height="21.00" fill="#ececec" />
<text transform="translate(425.40,602.20) scale(0.88,1)" font-size="12" fill="#000" text-anchor="middle" stroke="#000" stroke-width="0.08">11</text>
<text transform="translate(448.20,602.20) scale(0.88,1)" font-size="12" fill="#000" stroke="#000" stroke-width="0.08">10416</text>
<text transform="translate(508.20,602.20) scale(0.88,1)" font-size="12" fill="#000" stroke="#000" stroke-width="0.08">RL-IMV-13</text>
<text transform="translate(608.20,602.20) scale(0.88,1)" font-size="12" fill="#000" stroke="#000" stroke-width="0.08">1.257</text>
<text transform="translate(668.20,602.20) scale(0.88,1)" font-size="12" fill="#000" stroke="#000" stroke-width="0.08">10416</text>
<text transform="translate(788.20,602.20) scale(0.88,1)" font-size="12" fill="#000" stroke="#000" stroke-width="0.08">Phase - OC1 - 51</text>
<rect x="405.00" y="609.00" width="39.00" height="22.00" fill="#ffffff" />
<rect x="407.40" y="630.00" width="35.60" height="1.00" fill="#8e8e8e" />
<rect x="445.00" y="609.00" width="59.00" height="21.00" fill="#ececec" />
<rect x="505.00" y="609.00" width="99.00" height="21.00" fill="#ececec" />
<rect x="605.00" y="609.00" width="59.00" height="21.00" fill="#ececec" />
<rect x="665.00" y="609.00" width="59.00" height="21.00" fill="#ececec" />
<rect x="725.00" y="609.00" width="59.00" height="21.00" fill="#ececec" />
<rect x="785.00" y="609.00" width="222.00" height="21.00" fill="#ececec" />
<text transform="translate(425.40,624.20) scale(0.88,1)" font-size="12" fill="#000" text-anchor="middle" stroke="#000" stroke-width="0.08">12</text>
<text transform="translate(448.20,624.20) scale(0.88,1)" font-size="12" fill="#000" stroke="#000" stroke-width="0.08">10500</text>
<text transform="translate(508.20,624.20) scale(0.88,1)" font-size="12" fill="#000" stroke="#000" stroke-width="0.08">CB-IMV-13</text>
<text transform="translate(668.20,624.20) scale(0.88,1)" font-size="12" fill="#000" stroke="#000" stroke-width="0.08">83.3</text>
<text transform="translate(788.20,624.20) scale(0.88,1)" font-size="12" fill="#000" stroke="#000" stroke-width="0.08">Tripped by RL-IMV-13 Phase - OC1 - 51</text>
<rect x="405.00" y="631.00" width="39.00" height="22.00" fill="#ffffff" />
<rect x="407.40" y="652.00" width="35.60" height="1.00" fill="#8e8e8e" />
<rect x="445.00" y="631.00" width="59.00" height="21.00" fill="#ececec" />
<rect x="505.00" y="631.00" width="99.00" height="21.00" fill="#ececec" />
<rect x="605.00" y="631.00" width="59.00" height="21.00" fill="#ececec" />
<rect x="665.00" y="631.00" width="59.00" height="21.00" fill="#ececec" />
<rect x="725.00" y="631.00" width="59.00" height="21.00" fill="#ececec" />
<rect x="785.00" y="631.00" width="222.00" height="21.00" fill="#ececec" />
<text transform="translate(425.40,646.20) scale(0.88,1)" font-size="12" fill="#000" text-anchor="middle" stroke="#000" stroke-width="0.08">13</text>
<text transform="translate(448.20,646.20) scale(0.88,1)" font-size="12" fill="#000" stroke="#000" stroke-width="0.08">28709</text>
<text transform="translate(508.20,646.20) scale(0.88,1)" font-size="12" fill="#000" stroke="#000" stroke-width="0.08">RL-GEN1</text>
<text transform="translate(608.20,646.20) scale(0.88,1)" font-size="12" fill="#000" stroke="#000" stroke-width="0.08">0.315</text>
<text transform="translate(668.20,646.20) scale(0.88,1)" font-size="12" fill="#000" stroke="#000" stroke-width="0.08">28709</text>
<text transform="translate(788.20,646.20) scale(0.88,1)" font-size="12" fill="#000" stroke="#000" stroke-width="0.08">Phase - OC1 - 51</text>
<rect x="405.00" y="653.00" width="39.00" height="22.00" fill="#ffffff" />
<rect x="407.40" y="674.00" width="35.60" height="1.00" fill="#8e8e8e" />
<rect x="445.00" y="653.00" width="59.00" height="21.00" fill="#ececec" />
<rect x="505.00" y="653.00" width="99.00" height="21.00" fill="#ececec" />
<rect x="605.00" y="653.00" width="59.00" height="21.00" fill="#ececec" />
<rect x="665.00" y="653.00" width="59.00" height="21.00" fill="#ececec" />
<rect x="725.00" y="653.00" width="59.00" height="21.00" fill="#ececec" />
<rect x="785.00" y="653.00" width="222.00" height="21.00" fill="#ececec" />
<text transform="translate(425.40,668.20) scale(0.88,1)" font-size="12" fill="#000" text-anchor="middle" stroke="#000" stroke-width="0.08">14</text>
<text transform="translate(448.20,668.20) scale(0.88,1)" font-size="12" fill="#000" stroke="#000" stroke-width="0.08">28793</text>
<text transform="translate(508.20,668.20) scale(0.88,1)" font-size="12" fill="#000" stroke="#000" stroke-width="0.08">CB-GEN1</text>
<text transform="translate(668.20,668.20) scale(0.88,1)" font-size="12" fill="#000" stroke="#000" stroke-width="0.08">83.3</text>
<text transform="translate(788.20,668.20) scale(0.88,1)" font-size="12" fill="#000" stroke="#000" stroke-width="0.08">Tripped by RL-GEN1 Phase - OC1 - 51</text>
<rect x="405.00" y="675.00" width="39.00" height="22.00" fill="#ffffff" />
<rect x="445.00" y="675.00" width="59.00" height="21.00" fill="#ececec" />
<rect x="505.00" y="675.00" width="99.00" height="21.00" fill="#ececec" />
<rect x="605.00" y="675.00" width="59.00" height="21.00" fill="#ececec" />
<rect x="665.00" y="675.00" width="59.00" height="21.00" fill="#ececec" />
<rect x="725.00" y="675.00" width="59.00" height="21.00" fill="#ececec" />
<rect x="785.00" y="675.00" width="222.00" height="21.00" fill="#ececec" />
<text transform="translate(425.40,690.20) scale(0.88,1)" font-size="12" fill="#000" text-anchor="middle" stroke="#000" stroke-width="0.08">15</text>
<text transform="translate(448.20,690.20) scale(0.88,1)" font-size="12" fill="#000" stroke="#000" stroke-width="0.08">146827</text>
<text transform="translate(508.20,690.20) scale(0.88,1)" font-size="12" fill="#000" stroke="#000" stroke-width="0.08">OL-MP11</text>
<text transform="translate(608.20,690.20) scale(0.88,1)" font-size="12" fill="#000" stroke="#000" stroke-width="0.08">0.027</text>
<text transform="translate(668.20,690.20) scale(0.88,1)" font-size="12" fill="#000" stroke="#000" stroke-width="0.08">146827</text>
<rect x="405.00" y="696.00" width="39.00" height="1.00" fill="#a2a2a2" />
<path d="M409.8 372.6 L415.2 377.6 L409.8 382.6 Z" stroke="none" stroke-width="0" fill="#4a4a40" />
</g>
</svg></body></html>
